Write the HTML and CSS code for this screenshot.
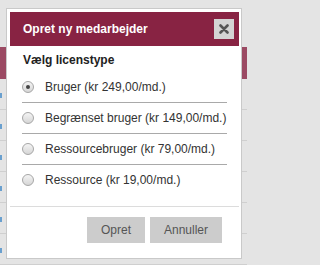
FILE: index.html
```html
<!DOCTYPE html>
<html lang="da">
<head>
<meta charset="utf-8">
<title>Opret ny medarbejder</title>
<link rel="stylesheet" href="styles.css">
</head>
<body>
<div class="page">
  <div class="band"></div>
  <div class="row"><span class="mark"></span></div>
  <div class="row"><span class="mark"></span></div>
  <div class="row"><span class="mark"></span></div>
  <div class="row"><span class="mark"></span></div>
  <div class="row"><span class="mark"></span></div>
  <div class="row"><span class="mark"></span></div>

  <div class="dialog">
    <div class="dlg-head">
      <span class="dlg-title">Opret ny medarbejder</span>
      <button class="close" type="button" aria-label="Luk">
        <svg width="10" height="10" viewBox="0 0 10 10"><path d="M1.5 1.5 L8.5 8.5 M8.5 1.5 L1.5 8.5" stroke="#555" stroke-width="2.6" stroke-linecap="round"/></svg>
      </button>
    </div>
    <div class="dlg-body">
      <div class="section-title">Vælg licenstype</div>
      <ul class="options">
        <li class="option"><span class="radio checked"></span><span class="label">Bruger (kr 249,00/md.)</span></li>
        <li class="option"><span class="radio"></span><span class="label">Begrænset bruger (kr 149,00/md.)</span></li>
        <li class="option"><span class="radio"></span><span class="label">Ressourcebruger (kr 79,00/md.)</span></li>
        <li class="option"><span class="radio"></span><span class="label">Ressource (kr 19,00/md.)</span></li>
      </ul>
    </div>
    <div class="dlg-foot">
      <button class="btn" type="button">Opret</button>
      <button class="btn" type="button">Annuller</button>
    </div>
  </div>
</div>
</body>
</html>
```

FILE: styles.css
```css
html, body {
  margin: 0;
  padding: 0;
}
body {
  background: #e4e4e4;
  font-family: "Liberation Sans", Arial, sans-serif;
  font-size: 12px;
  color: #333;
}
.page {
  position: relative;
  width: 247px;
  height: 265px;
  overflow: hidden;
}
.band {
  margin-top: 47px;
  height: 32px;
  background: #9b4a63;
}
.row {
  height: 30px;
  border-bottom: 1px solid #cfcfcf;
  position: relative;
}
.mark {
  position: absolute;
  left: 0;
  top: 14px;
  width: 2px;
  height: 5px;
  background: #6aa0cf;
}
.dialog {
  position: absolute;
  left: 6px;
  top: 8px;
  width: 236px;
  height: 251px;
  box-sizing: border-box;
  border: 1px solid #c9c9c9;
  padding: 3px 2px 3px 3px;
  background: #fff;
  display: flex;
  flex-direction: column;
}
.dlg-head {
  height: 34px;
  background: #882343;
  display: flex;
  align-items: center;
  justify-content: space-between;
  padding: 0 5px 0 13px;
}
.dlg-title {
  color: #fff;
  font-weight: bold;
  font-size: 12px;
}
.close {
  width: 20px;
  height: 20px;
  border: 0;
  padding: 0;
  background: #d4d4d4;
  display: flex;
  align-items: center;
  justify-content: center;
}
.dlg-body {
  padding: 6px 12px 0 12px;
}
.section-title {
  font-weight: bold;
  line-height: 16px;
  padding-left: 1px;
  color: #222;
}
.options {
  list-style: none;
  margin: 4px 0 0 0;
  padding: 0;
}
.option {
  height: 30px;
  display: flex;
  align-items: center;
  border-bottom: 1px solid #a9a9a9;
}
.option:last-child {
  border-bottom: 0;
}
.radio {
  width: 12px;
  height: 12px;
  box-sizing: border-box;
  border-radius: 50%;
  border: 1px solid #a6a6a6;
  background: linear-gradient(#f4f4f4, #d6d6d6);
  position: relative;
  flex: none;
  margin-right: 11px;
}
.radio.checked::after {
  content: "";
  position: absolute;
  left: 3px;
  top: 3px;
  width: 4px;
  height: 4px;
  border-radius: 50%;
  background: #444;
}
.label {
  color: #333;
  white-space: nowrap;
}
.dlg-foot {
  margin-top: 11px;
  border-top: 1px solid #dcdcdc;
  padding: 10px 17px 0 0;
  display: flex;
  justify-content: flex-end;
  gap: 5px;
}
.btn {
  height: 26px;
  border: 0;
  background: #cccccc;
  color: #555;
  font-family: "Liberation Sans", Arial, sans-serif;
  font-size: 12px;
  padding: 0 14px;
}
.btn:first-child {
  padding: 0 14px;
}
```
